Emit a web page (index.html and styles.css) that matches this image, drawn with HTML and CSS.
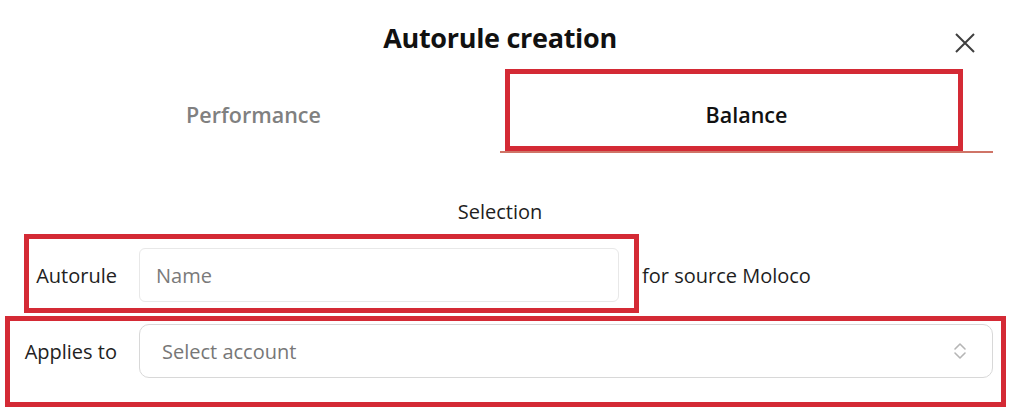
FILE: index.html
```html
<!DOCTYPE html>
<html lang="en">
<head>
<meta charset="utf-8">
<title>Autorule creation</title>
<link rel="stylesheet" href="styles.css">
</head>
<body>
<div class="modal">
  <div class="header">
    <span></span>
    <h1 class="title">Autorule creation</h1>
    <button class="close" aria-label="Close">
      <svg width="20" height="20" viewBox="0 0 20 20"><path d="M1 1 L19 19 M19 1 L1 19" stroke="#3f3f3f" stroke-width="2" fill="none"/></svg>
    </button>
  </div>
  <div class="tabs">
    <div class="tab">Performance</div>
    <div class="tab active">Balance<span class="annot annot-tab"></span></div>
  </div>
  <div class="section-title">Selection</div>
  <div class="row row-name">
    <span class="annot annot-name"></span>
    <label class="label">Autorule</label>
    <div class="input">Name</div>
    <span class="suffix">for source Moloco</span>
  </div>
  <div class="row row-account">
    <span class="annot annot-account"></span>
    <label class="label">Applies to</label>
    <div class="select">
      <span>Select account</span>
      <svg width="14" height="18" viewBox="0 0 14 18"><path d="M2 7 L7 2 L12 7 M2 11 L7 16 L12 11" stroke="#b5b5b5" stroke-width="1.6" fill="none" stroke-linecap="round" stroke-linejoin="round"/></svg>
    </div>
  </div>
</div>
</body>
</html>
```
FILE: styles.css
```css
* { box-sizing: border-box; }
html, body { min-height: 417px; }
body {
  margin: 0;
  background: #fff;
  font-family: "Open Sans", "Noto Sans", sans-serif;
  color: #1e1e1e;
}
.modal {
  width: 986px;
  margin-left: 7px;
  padding-bottom: 39px;
}
.header {
  display: grid;
  grid-template-columns: 1fr auto 1fr;
  align-items: center;
  height: 72px;
  padding-top: 4px;
}
.title {
  margin: 0;
  font-size: 27px;
  font-weight: 700;
  letter-spacing: -0.3px;
  color: #111;
  line-height: 34px;
}
.close {
  justify-self: end;
  margin-right: 18px;
  margin-top: 10px;
  border: 0;
  background: none;
  padding: 0;
  width: 20px;
  height: 20px;
  display: flex;
}
.tabs {
  display: flex;
  height: 81px;
}
.tab {
  position: relative;
  flex: 1;
  display: flex;
  align-items: center;
  justify-content: center;
  padding-top: 5px;
  font-size: 21.5px;
  font-weight: 600;
  color: #808080;
  border-bottom: 2px solid transparent;
}
.tab.active {
  color: #111;
  border-bottom-color: #cf7467;
}
.annot {
  position: absolute;
  border: 5px solid #d42a35;
  pointer-events: none;
}
.annot-tab {
  left: 5px;
  top: -3px;
  width: 458px;
  height: 82px;
}
.section-title {
  margin-top: 47px;
  height: 24px;
  line-height: 24px;
  text-align: center;
  font-size: 20px;
}
.row {
  position: relative;
  display: flex;
  align-items: center;
  height: 54px;
  font-size: 20px;
}
.row-name { margin-top: 24px; }
.row-account { margin-top: 22px; }
.label {
  width: 110px;
  margin-right: 22px;
  text-align: right;
  color: #222;
}
.input {
  width: 480px;
  height: 54px;
  border: 1px solid #e8e8e8;
  border-radius: 6px;
  padding-left: 16px;
  display: flex;
  align-items: center;
  color: #7a7a7a;
}
.suffix {
  margin-left: 23px;
  color: #1e1e1e;
}
.select {
  flex: 1;
  height: 54px;
  border: 1px solid #d8d8d8;
  border-radius: 10px;
  padding-left: 22px;
  padding-right: 25px;
  display: flex;
  align-items: center;
  justify-content: space-between;
  color: #777;
}
.annot-name {
  left: 17px;
  top: -14px;
  width: 615px;
  height: 79px;
}
.annot-account {
  left: -2px;
  top: -8px;
  width: 1001px;
  height: 91px;
}
```
